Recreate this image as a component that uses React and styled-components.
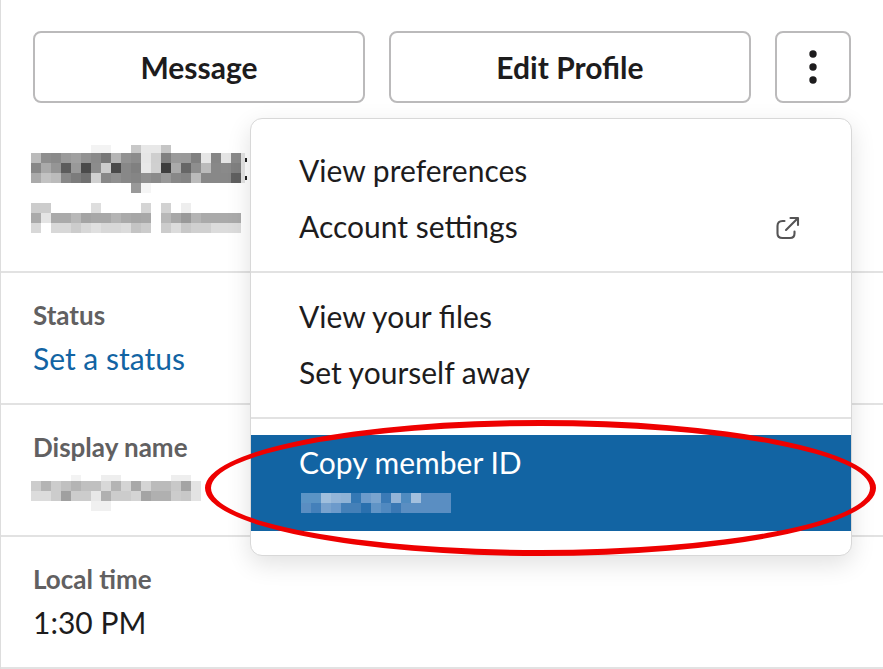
import React from "react";
import styled, { createGlobalStyle } from "styled-components";

const GlobalStyle = createGlobalStyle`
  *, *::before, *::after { box-sizing: border-box; }
  body {
    margin: 0;
    background: #fff;
    color: #1d1c1d;
    font-family: Lato, "Open Sans", sans-serif;
    font-size: 30px;
  }
`;

const Panel = styled.main`
  border-left: 1px solid #dddddd;
`;

const Header = styled.header`
  padding: 31px 32px 38px;
  border-bottom: 2px solid #e2e2e2;
`;

const Actions = styled.div`
  position: relative;
  display: flex;
  gap: 24px;
  margin-bottom: 40px;
`;

const Button = styled.button`
  flex: ${(p) => (p.$icon ? "0 0 76px" : "1 1 auto")};
  display: flex;
  align-items: center;
  justify-content: center;
  height: 72px;
  padding: 0;
  border: 2px solid #bbbabb;
  border-radius: 8px;
  background: #fff;
  color: #1d1c1d;
  font: inherit;
  font-weight: 700;
  cursor: pointer;
`;

const Menu = styled.div`
  position: absolute;
  top: 87px;
  right: -1px;
  z-index: 1;
  width: 602px;
  padding: 24px 0;
  border: 1px solid #d8d8d8;
  border-radius: 12px;
  background: #fff;
  box-shadow: 0 8px 24px rgba(0, 0, 0, 0.12);
`;

const MenuItem = styled.button`
  position: relative;
  display: flex;
  align-items: flex-start;
  justify-content: space-between;
  width: 100%;
  min-height: ${(p) => (p.$active ? "96px" : "56px")};
  padding: 0 51px 0 48px;
  border: 0;
  background: ${(p) => (p.$active ? "#1264a3" : "transparent")};
  color: ${(p) => (p.$active ? "#fff" : "inherit")};
  font: inherit;
  line-height: 54px;
  text-align: left;
  cursor: pointer;
`;

const MenuRule = styled.hr`
  height: 2px;
  margin: 16px 0;
  border: 0;
  background: #e2e2e2;
`;

const ItemBody = styled.span`
  display: flex;
  flex-direction: column;
  gap: 4px;
`;

const Highlight = styled.span`
  position: absolute;
  inset: -15px -25px -25px -46px;
  border: 6px solid #ee0000;
  border-radius: 50%;
  pointer-events: none;
`;

const Section = styled.section`
  padding: 24px 32px 22px;
  border-bottom: 2px solid #e2e2e2;
`;

const Label = styled.h2`
  margin: 0 0 4px;
  color: #616061;
  font-size: 26px;
  font-weight: 700;
  line-height: 36px;
`;

const Value = styled.div`
  min-height: 44px;
  line-height: 42px;
`;

const StatusLink = styled.a`
  color: #1264a3;
  text-decoration: none;
`;

const Pixels = styled.svg`
  display: block;
  margin-left: ${(p) => (p.$inset ? "2px" : "-2px")};
`;

const OpenIcon = styled.svg`
  flex: none;
  margin-top: 17px;
`;

const Identity = styled.div`
  display: grid;
  gap: 10px;
`;

const NAME = [
  ". . . . . . f3 f3 . . c8 e8 e8 c5 . . . . . . .",
  "bb 8e 8a 9a a0 92 8a 77 b5 92 8c e6 cf 80 9a 99 80 e6 86 e4 8a",
  "88 aa 95 5c 99 4a 8c cc 4a 88 80 e8 d0 3e aa 66 8e bb 88 8a 80",
  "aa c2 bb 88 7c 70 d0 88 90 88 85 90 8a 99 88 84 bb 88 88 88 60",
  ". . . . . . . . . . 99 f5 . . . . . . . . .",
];
const TITLE = [
  "cc cc . . . . de . . . . d5 . d2 . ee . . . . .",
  "aa e4 aa aa b8 a4 a8 a8 b4 aa a6 a8 . b8 a8 99 b4 aa aa aa aa",
  "d8 . d8 d8 cc d8 e0 d8 d8 dc c4 cc . cc dc c8 d0 d0 dc dc dc",
];
const DISPLAY = [
  ". . . . f3 . . ee ee . . . . . ee ee .",
  "cc b4 cc c0 b4 c0 c0 d8 b4 d4 a8 d4 bb bb c8 a4 e3",
  "dc dc cc a0 cc cc e8 b0 cc cc d4 a4 b0 b0 cc c8 e3",
  ". . . . . . f0 f0 . . . . . . . . .",
];
const MEMBER_ID = [
  "5b94c5 5b94c5 a0bfdd 93b5d8 8fb3d6 3478b4 6c9bcb 79a4cf 3a7ab6 93b4d8 4f8bc0 a3c0de 5a8ec2 5a8ec2 5a8ec2",
  "5a8ec2 4480ba 78a2ce 6c9acb 4480b8 4480b8 2a70ae 6094c6 5089c0 3a78b4 5a8ec2 5a8ec2 5a8ec2 5a8ec2 5a8ec2",
];

/* Draws masked text as 10px blocks; `trim` shortens the first row from the top. */
function Mosaic({ rows, label, trim = 0, inset, children }) {
  const width = rows[0].split(" ").length * 10 + (children ? 8 : 0);
  return (
    <Pixels
      $inset={inset}
      width={width}
      height={rows.length * 10}
      role="img"
      aria-label={label}
      shapeRendering="crispEdges"
    >
      {rows.map((row, y) =>
        row.split(" ").map((tone, x) =>
          tone === "." ? null : (
            <rect
              key={`${x}-${y}`}
              x={x * 10}
              y={y * 10 + (y === 0 ? trim : 0)}
              width="10"
              height={y === 0 ? 10 - trim : 10}
              fill={`#${tone.length === 2 ? tone.repeat(3) : tone}`}
            />
          )
        )
      )}
      {children}
    </Pixels>
  );
}

function MoreIcon() {
  return (
    <svg width="12" height="36" viewBox="0 0 12 36" fill="#1d1c1d" aria-hidden="true">
      <circle cx="6" cy="5" r="3.7" />
      <circle cx="6" cy="18" r="3.7" />
      <circle cx="6" cy="31" r="3.7" />
    </svg>
  );
}

function ExternalIcon() {
  return (
    <OpenIcon
      width="24"
      height="24"
      viewBox="0 0 24 24"
      fill="none"
      stroke="#555455"
      strokeWidth="2.1"
      strokeLinecap="round"
      strokeLinejoin="round"
      aria-hidden="true"
    >
      <path d="M8.5 5H6.5Q1.5 5 1.5 10V17.5Q1.5 22 6.5 22H14Q18.5 22 18.5 17.500V15.500" />
      <path d="M10 14L22 2M14.500 2H22V9" />
    </OpenIcon>
  );
}

export default function App() {
  return (
    <>
      <GlobalStyle />
      <Panel>
        <Header>
          <Actions>
            <Button type="button">Message</Button>
            <Button type="button">Edit Profile</Button>
            <Button type="button" $icon aria-label="More actions" aria-expanded="true">
              <MoreIcon />
            </Button>
            <Menu role="menu">
              <MenuItem type="button" role="menuitem">View preferences</MenuItem>
              <MenuItem type="button" role="menuitem">
                Account settings
                <ExternalIcon />
              </MenuItem>
              <MenuRule />
              <MenuItem type="button" role="menuitem">View your files</MenuItem>
              <MenuItem type="button" role="menuitem">Set yourself away</MenuItem>
              <MenuRule />
              <MenuItem type="button" role="menuitem" $active>
                <ItemBody>
                  Copy member ID
                  <Mosaic rows={MEMBER_ID} label="Hidden member ID" inset />
                </ItemBody>
                <Highlight />
              </MenuItem>
            </Menu>
          </Actions>
          <Identity>
            <Mosaic rows={NAME} label="Hidden name" trim={2}>
              <rect x="210" y="10" width="4" height="30" fill="#e4e4e4" />
              <rect x="214" y="15" width="2" height="4" fill="#222" />
              <rect x="214" y="33" width="2" height="4" fill="#222" />
            </Mosaic>
            <Mosaic rows={TITLE} label="Hidden title" />
          </Identity>
        </Header>
        <Section>
          <Label>Status</Label>
          <Value>
            <StatusLink href="#status">Set a status</StatusLink>
          </Value>
        </Section>
        <Section>
          <Label>Display name</Label>
          <MaskedValue>
            <Mosaic rows={DISPLAY} label="Hidden display name" trim={4} />
          </MaskedValue>
        </Section>
        <Section>
          <Label>Local time</Label>
          <Value>1:30 PM</Value>
        </Section>
      </Panel>
    </>
  );
}

const MaskedValue = styled(Value)`
  display: flex;
  align-items: center;
`;
